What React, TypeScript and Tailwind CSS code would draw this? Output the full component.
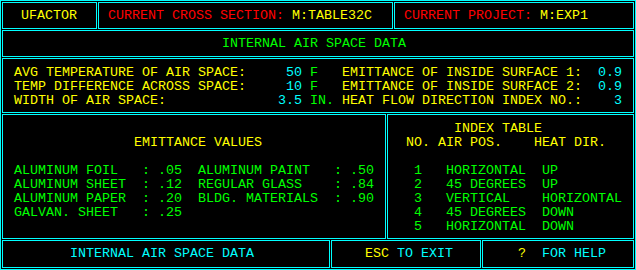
import React from "react";

const Y = "text-[#ffff00]";
const C = "text-[#00ffff]";
const G = "text-[#00ff00]";
const R = "text-[#ff0000]";

const box = "border border-[#00ffff] bg-black";

export default function App() {
  return (
    <div className="w-[636px] h-[270px] bg-black border border-[#00ffff] p-px flex flex-col gap-px font-['Liberation_Mono',monospace] text-[13.33px] leading-[14px] whitespace-pre">
      {/* Row 1 */}
      <div className="flex gap-px h-[27px]">
        <div className={`${box} w-[95px] flex items-center pl-[18px] ${Y}`}>UFACTOR</div>
        <div className={`${box} w-[295px] flex items-center pl-[9px]`}>
          <span className={R}>CURRENT CROSS SECTION: </span>
          <span className={Y}>M:TABLE32C</span>
        </div>
        <div className={`${box} w-[240px] flex items-center pl-[9px]`}>
          <span className={R}>CURRENT PROJECT: </span>
          <span className={Y}>M:EXP1</span>
        </div>
      </div>

      {/* Row 2 */}
      <div className={`${box} h-[27px] flex items-center pl-[219px] ${G}`}>INTERNAL AIR SPACE DATA</div>

      {/* Row 3 */}
      <div className={`${box} h-[55px] pt-[7px] pl-[11px] flex flex-col`}>
        <div>
          <span className={Y}>AVG TEMPERATURE OF AIR SPACE:     </span>
          <span className={C}>50</span>
          <span className={G}> F   </span>
          <span className={Y}>EMITTANCE OF INSIDE SURFACE 1:  </span>
          <span className={C}>0.9</span>
        </div>
        <div>
          <span className={Y}>TEMP DIFFERENCE ACROSS SPACE:     </span>
          <span className={C}>10</span>
          <span className={G}> F   </span>
          <span className={Y}>EMITTANCE OF INSIDE SURFACE 2:  </span>
          <span className={C}>0.9</span>
        </div>
        <div>
          <span className={Y}>WIDTH OF AIR SPACE:              </span>
          <span className={C}>3.5</span>
          <span className={G}> IN. </span>
          <span className={Y}>HEAT FLOW DIRECTION INDEX NO.:    </span>
          <span className={C}>3</span>
        </div>
      </div>

      {/* Row 4 */}
      <div className="flex gap-px h-[125px]">
        <div className={`${box} w-[384px] pt-[7px] pl-[11px] flex flex-col`}>
          <div> </div>
          <div className={Y}>{"               EMITTANCE VALUES"}</div>
          <div> </div>
          <div className={G}>{"ALUMINUM FOIL   : .05  ALUMINUM PAINT   : .50"}</div>
          <div className={G}>{"ALUMINUM SHEET  : .12  REGULAR GLASS    : .84"}</div>
          <div className={G}>{"ALUMINUM PAPER  : .20  BLDG. MATERIALS  : .90"}</div>
          <div className={G}>{"GALVAN. SHEET   : .25"}</div>
        </div>
        <div className={`${box} w-[247px] pt-[7px] pl-[18px] flex flex-col`}>
          <div className={Y}>{"      INDEX TABLE"}</div>
          <div className={Y}>{"NO. AIR POS.    HEAT DIR."}</div>
          <div> </div>
          <div className={G}>{" 1   HORIZONTAL  UP"}</div>
          <div className={G}>{" 2   45 DEGREES  UP"}</div>
          <div className={G}>{" 3   VERTICAL    HORIZONTAL"}</div>
          <div className={G}>{" 4   45 DEGREES  DOWN"}</div>
          <div className={G}>{" 5   HORIZONTAL  DOWN"}</div>
        </div>
      </div>

      {/* Row 5 */}
      <div className="flex gap-px h-[28px]">
        <div className={`${box} w-[328px] flex items-center pl-[67px] ${C}`}>INTERNAL AIR SPACE DATA</div>
        <div className={`${box} w-[150px] flex items-center pl-[33px]`}>
          <span className={Y}>ESC</span>
          <span className={C}> TO EXIT</span>
        </div>
        <div className={`${box} w-[152px] flex items-center pl-[35px]`}>
          <span className={Y}>?</span>
          <span className={C}>  FOR HELP</span>
        </div>
      </div>
    </div>
  );
}
